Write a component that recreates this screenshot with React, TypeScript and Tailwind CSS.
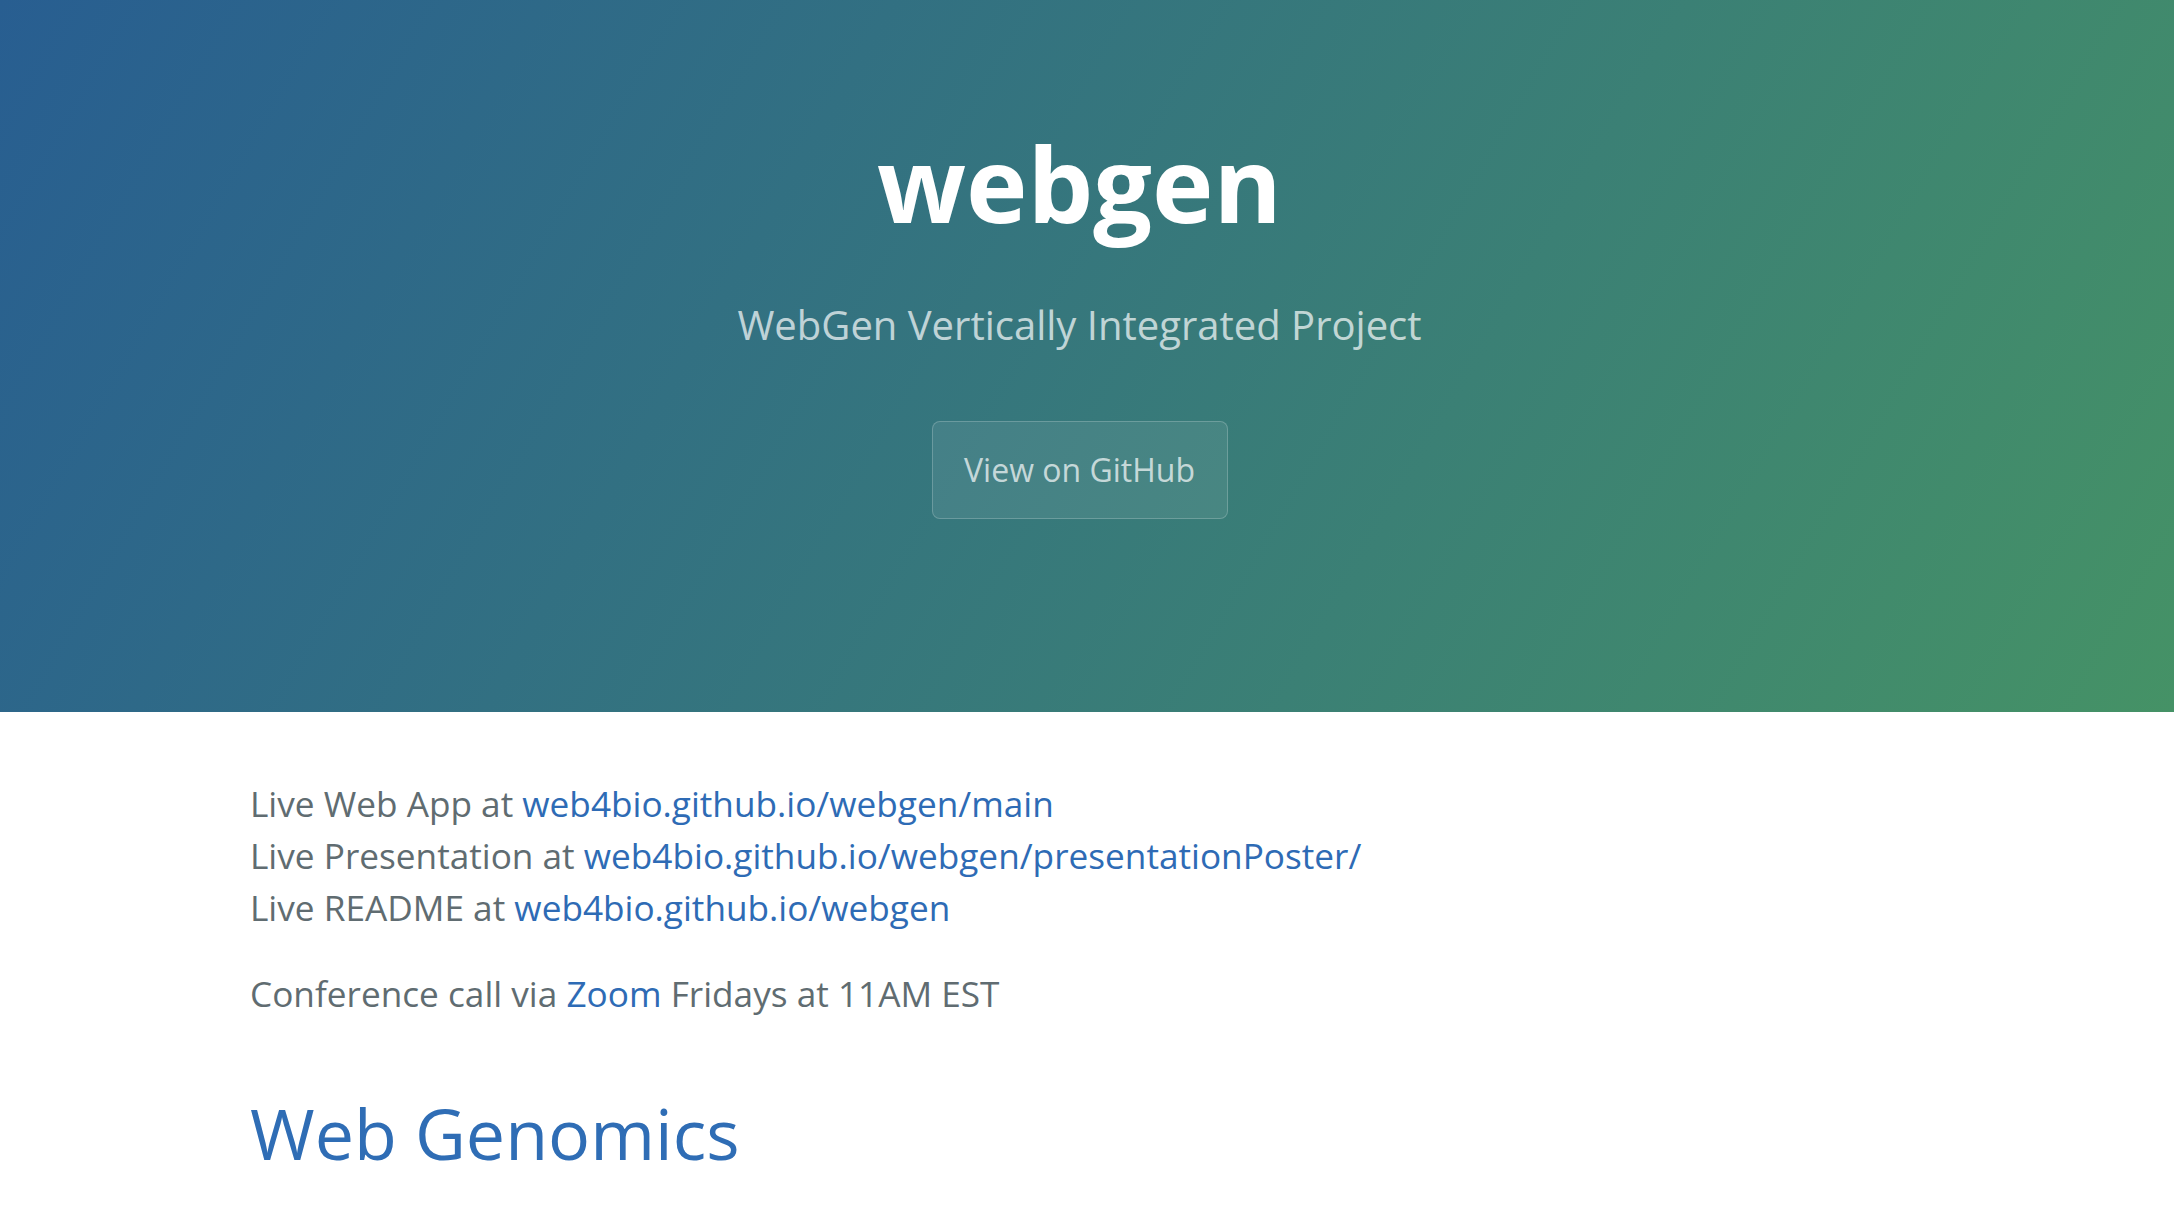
import React from "react";

export default function App() {
  return (
    <div className="min-h-[1222px] bg-white" style={{ fontFamily: '"Open Sans", "Noto Sans", sans-serif' }}>
      <header className="h-[712px] flex flex-col items-center bg-[linear-gradient(120deg,#285e91,#459266)] pt-[131px] pr-[15px]">
        <h1 className="text-[104px] leading-none font-bold text-white m-0">webgen</h1>
        <h2 className="mt-[70px] text-[40px] leading-none font-normal text-white/70">WebGen Vertically Integrated Project</h2>
        <a
          href="#"
          className="mt-[76px] w-[296px] h-[98px] flex items-center justify-center rounded-[8px] border border-white/20 bg-white/[0.08] text-[32px] text-white/70 no-underline"
        >
          View on GitHub
        </a>
      </header>
      <main className="pl-[250px] pr-[200px] pt-[65px] text-[35.2px] leading-[52px] text-[#606c71]">
        <p className="m-0">
          Live Web App at <a href="#" className="text-[#2e6bb5]">web4bio.github.io/webgen/main</a>
          <br />
          Live Presentation at <a href="#" className="text-[#2e6bb5]">web4bio.github.io/webgen/presentationPoster/</a>
          <br />
          Live README at <a href="#" className="text-[#2e6bb5]">web4bio.github.io/webgen</a>
        </p>
        <p className="mt-[34px] m-0">
          Conference call via <a href="#" className="text-[#2e6bb5]">Zoom</a> Fridays at 11AM EST
        </p>
        <h1 className="mt-[71px] text-[70px] leading-[1.25] font-normal text-[#2f6db5]">Web Genomics</h1>
      </main>
    </div>
  );
}
